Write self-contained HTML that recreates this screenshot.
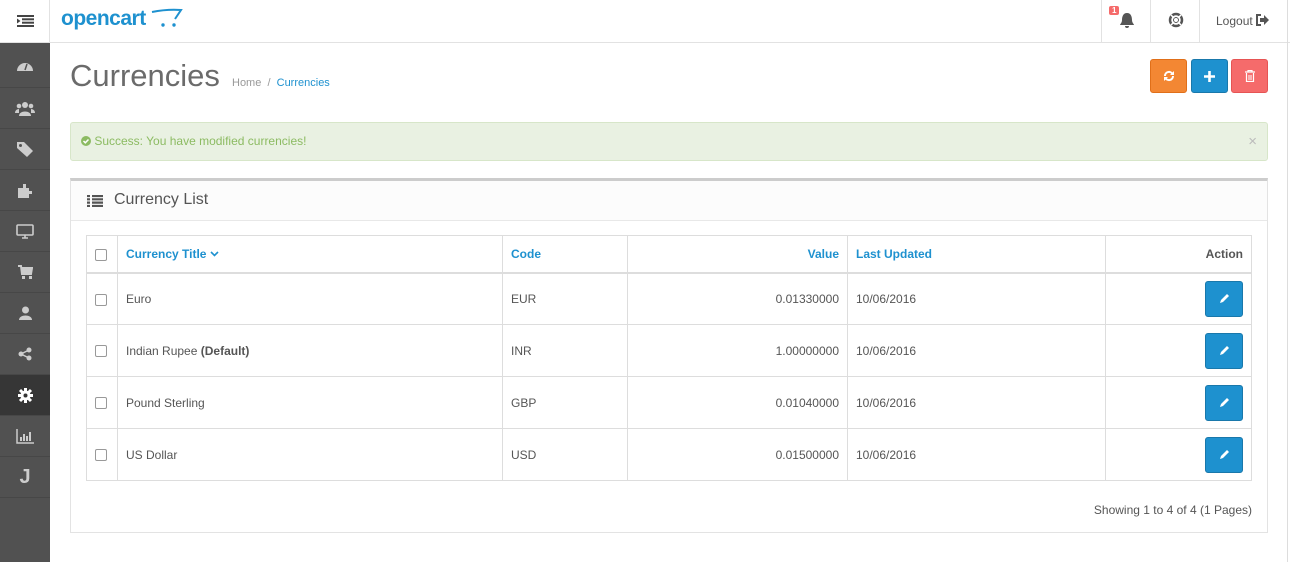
<!DOCTYPE html>
<html><head><meta charset="utf-8"><style>
*{box-sizing:border-box;margin:0;padding:0}
body{width:1290px;height:562px;overflow:hidden;background:#fff;font-family:"Liberation Sans",sans-serif;font-size:12px;color:#555;position:relative}
.hdr{position:absolute;left:0;top:0;width:1290px;height:43px;border-bottom:1px solid #e2e2e2;background:#fff}
.tog{position:absolute;left:0;top:0;width:50px;height:42px;border-right:1px solid #e2e2e2}
.logo{position:absolute;left:61px;top:7px;font-size:21px;font-weight:bold;color:#1e91cf;letter-spacing:-0.5px}
.hnav{position:absolute;top:0;height:42px;border-left:1px solid #e2e2e2}
.side{position:absolute;left:0;top:43px;width:50px;height:519px;background:#515151}
.si{height:41px;border-bottom:1px solid #474747;display:flex;align-items:center;justify-content:center}
.si:first-child{height:45px}
.si.act{background:#363636}
h1{position:absolute;left:70px;top:58px;font-weight:normal;font-size:31px;color:#6b6b6b}
.bc{position:absolute;left:232px;top:77px;font-size:11px;color:#999}
.bc a{color:#1e91cf}
.btn{position:absolute;top:59px;width:37px;height:34px;border-radius:3px;display:flex;align-items:center;justify-content:center;color:#fff;font-weight:bold}
.alert{position:absolute;left:70px;top:122px;width:1198px;height:39px;background:#e9f1e2;border:1px solid #d7e6c9;border-radius:3px;color:#8cbb62;font-size:12px;padding:11px 0 0 10px}
.panel{position:absolute;left:70px;top:178px;width:1198px;height:355px;border:1px solid #e3e3e3;border-top:3px solid #ccc}
.ph{height:40px;background:#fcfcfc;border-bottom:1px solid #e8e8e8;font-size:16px;color:#555;padding:10px 0 0 43px;position:relative}
table{position:absolute;left:15px;top:54px;width:1166px;border-collapse:collapse}
td,th{border:1px solid #ddd;padding:0 8px;font-size:12px;text-align:left;color:#555}
th{height:37px;border-bottom:2px solid #ddd;color:#1e91cf;font-weight:bold}
td{height:52px}
.r{text-align:right}
.cb{display:inline-block;width:12px;height:12px;border:1px solid #999;border-radius:2px;background:#fff;vertical-align:middle}
.ed{display:inline-flex;width:38px;height:36px;background:#1e91cf;border:1px solid #1978ab;border-radius:3px;align-items:center;justify-content:center}
.foot{position:absolute;right:15px;top:322px;font-size:12px;color:#555}
</style></head><body>
<div class="hdr">
 <div class="tog"><svg style="position:absolute;left:17px;top:15px" width="17" height="12"><rect x="0" y="0" width="17" height="2" fill="#444"/><rect x="5" y="3.3" width="12" height="2" fill="#444"/><rect x="5" y="6.7" width="12" height="2" fill="#444"/><rect x="0" y="10" width="17" height="2" fill="#444"/><path d="M0 3.5L3.5 6L0 8.5z" fill="#444"/></svg></div>
 <div class="logo">opencart<svg width="40" height="24" style="position:absolute;left:88px;top:-1px"><path d="M3 6 Q18 3 32 4 L26 13" stroke="#1e91cf" stroke-width="2" fill="none"/><circle cx="14" cy="19" r="1.7" fill="#1e91cf"/><circle cx="25" cy="19" r="1.7" fill="#1e91cf"/></svg></div>
 <div class="hnav" style="left:1101px;width:50px"><span style="position:absolute;left:7px;top:6px;background:#f56b6b;color:#fff;font-size:8px;font-weight:bold;padding:0 3px;border-radius:2px">1</span><svg style="position:absolute;left:17px;top:12px" width="16" height="17"><path d="M8 1C4 1 3 5 3 8C3 11 1 12 1 13H15C15 12 13 11 13 8C13 5 12 1 8 1ZM6 14H10A2 2 0 0 1 6 14Z" fill="#555"/></svg></div>
 <div class="hnav" style="left:1150px;width:50px"><svg style="position:absolute;left:17px;top:12px" width="16" height="16"><circle cx="8" cy="8" r="6" stroke="#555" stroke-width="2.5" fill="none"/><circle cx="8" cy="8" r="2.5" fill="#fff" stroke="#555"/><path d="M3 3L6 6M13 3L10 6M3 13L6 10M13 13L10 10" stroke="#fff" stroke-width="1.5"/></svg></div>
 <div class="hnav" style="left:1199px;width:91px;font-size:12px;color:#555;padding:14px 0 0 16px">Logout <svg width="14" height="12" style="vertical-align:-1px"><path d="M5 1H1V11H5" stroke="#555" stroke-width="2" fill="none"/><path d="M4 4H8V1L13 6L8 11V8H4Z" fill="#555"/></svg></div>
 <div style="position:absolute;left:1287px;top:0;width:1px;height:562px;background:#ddd"></div>
</div>
<div class="side">
 <div class="si"><svg width="18" height="14"><path d="M1 13A8 8 0 1 1 17 13Z" fill="#ccc"/><path d="M9 12L11 6" stroke="#515151" stroke-width="1.5"/></svg></div>
 <div class="si"><svg width="20" height="15"><circle cx="10" cy="4" r="3" fill="#ccc"/><circle cx="4" cy="5" r="2.3" fill="#ccc"/><circle cx="16" cy="5" r="2.3" fill="#ccc"/><path d="M4 15C4 9 16 9 16 15Z" fill="#ccc"/><path d="M0 12C0 8 4 8 4 8V12ZM20 12C20 8 16 8 16 8V12Z" fill="#ccc"/></svg></div>
 <div class="si"><svg width="18" height="16"><path d="M1 1H8L17 10L11 16L1 7Z" fill="#ccc"/><circle cx="4.5" cy="4.5" r="1.5" fill="#515151"/></svg></div>
 <div class="si"><svg width="16" height="15"><path d="M1 5H6V1H9V5H12V8H15V11H12V15H1Z" fill="#ccc"/></svg></div>
 <div class="si"><svg width="18" height="15"><rect x="1" y="1" width="16" height="10" rx="1" stroke="#ccc" stroke-width="1.6" fill="none"/><path d="M6 14H12M9 11V14" stroke="#ccc" stroke-width="1.6"/></svg></div>
 <div class="si"><svg width="15" height="14"><path d="M0 1H3L4 9H13L14 3H4" stroke="#ccc" stroke-width="2" fill="none"/><rect x="4" y="3" width="10" height="6" fill="#ccc"/><rect x="4" y="11" width="3" height="3" fill="#ccc"/><rect x="11" y="11" width="3" height="3" fill="#ccc"/></svg></div>
 <div class="si"><svg width="13" height="14"><circle cx="6.5" cy="4" r="3.5" fill="#ccc"/><path d="M0 14C0 8 13 8 13 14Z" fill="#ccc"/></svg></div>
 <div class="si"><svg width="14" height="14"><circle cx="11" cy="3" r="2.5" fill="#ccc"/><circle cx="3" cy="7" r="2.5" fill="#ccc"/><circle cx="11" cy="11" r="2.5" fill="#ccc"/><path d="M11 3L3 7L11 11" stroke="#ccc" stroke-width="1.5" fill="none"/></svg></div>
 <div class="si act"><svg width="15" height="15"><circle cx="7.5" cy="7.5" r="5" fill="#fff"/><path d="M7.5 0V15M0 7.5H15M2 2L13 13M13 2L2 13" stroke="#fff" stroke-width="3"/><circle cx="7.5" cy="7.5" r="2" fill="#363636"/></svg></div>
 <div class="si"><svg width="18" height="15"><path d="M1 0V14H18" stroke="#ccc" stroke-width="1.5" fill="none"/><path d="M5 12V8M8 12V5M11 12V7M14 12V3" stroke="#ccc" stroke-width="2"/></svg></div>
 <div class="si"><span style="color:#ccc;font-size:20px;font-weight:bold">J</span></div>
</div>
<h1>Currencies</h1>
<div class="bc">Home &nbsp;/ &nbsp;<a>Currencies</a></div>
<div class="btn" style="left:1150px;background:#f38733;border:1px solid #e06f19"><svg width="12" height="12"><path d="M2 6A4 4 0 0 1 9.5 4M10 6A4 4 0 0 1 2.5 8" stroke="#fff" stroke-width="2" fill="none"/><path d="M11 1V5H7ZM1 11V7H5Z" fill="#fff"/></svg></div>
<div class="btn" style="left:1191px;background:#1e91cf;border:1px solid #1978ab"><svg width="11" height="11"><path d="M5.5 0V11M0 5.5H11" stroke="#fff" stroke-width="2.6"/></svg></div>
<div class="btn" style="left:1231px;background:#f56b6b;border:1px solid #e65454"><svg width="10" height="12"><path d="M0 2H10M3 2V0.5H7V2M1.5 3V11.5H8.5V3" stroke="#fff" stroke-width="1.2" fill="none"/><path d="M4 5V10M6 5V10" stroke="#fff"/></svg></div>
<div class="alert"><svg width="10" height="10" style="vertical-align:-1px"><circle cx="5" cy="5" r="5" fill="#8cbb62"/><path d="M2.5 5L4.3 6.8L7.5 3.5" stroke="#fff" stroke-width="1.5" fill="none"/></svg> Success: You have modified currencies!<span style="position:absolute;right:10px;top:10px;color:#bbb;font-size:15px">×</span></div>
<div class="panel">
 <div class="ph"><svg style="position:absolute;left:16px;top:14px" width="16" height="12"><path d="M0 1H3M5 1H16M0 4.3H3M5 4.3H16M0 7.6H3M5 7.6H16M0 11H3M5 11H16" stroke="#555" stroke-width="2.2"/></svg>Currency List</div>
 <table>
  <tr><th style="width:31px"><span class="cb"></span></th><th style="width:385px">Currency Title <svg width="9" height="6" style="vertical-align:1px"><path d="M1 1L4.5 4.5L8 1" stroke="#1e91cf" stroke-width="1.6" fill="none"/></svg></th><th style="width:125px">Code</th><th class="r" style="width:220px">Value</th><th style="width:258px">Last Updated</th><th class="r" style="color:#555">Action</th></tr>
  <tr><td><span class="cb"></span></td><td>Euro</td><td>EUR</td><td class="r">0.01330000</td><td>10/06/2016</td><td class="r"><span class="ed"><svg width="11" height="11"><path d="M1 10L2 7L8 1L10 3L4 9Z" fill="#fff"/></svg></span></td></tr>
  <tr><td><span class="cb"></span></td><td>Indian Rupee <b>(Default)</b></td><td>INR</td><td class="r">1.00000000</td><td>10/06/2016</td><td class="r"><span class="ed"><svg width="11" height="11"><path d="M1 10L2 7L8 1L10 3L4 9Z" fill="#fff"/></svg></span></td></tr>
  <tr><td><span class="cb"></span></td><td>Pound Sterling</td><td>GBP</td><td class="r">0.01040000</td><td>10/06/2016</td><td class="r"><span class="ed"><svg width="11" height="11"><path d="M1 10L2 7L8 1L10 3L4 9Z" fill="#fff"/></svg></span></td></tr>
  <tr><td><span class="cb"></span></td><td>US Dollar</td><td>USD</td><td class="r">0.01500000</td><td>10/06/2016</td><td class="r"><span class="ed"><svg width="11" height="11"><path d="M1 10L2 7L8 1L10 3L4 9Z" fill="#fff"/></svg></span></td></tr>
 </table>
 <div class="foot">Showing 1 to 4 of 4 (1 Pages)</div>
</div>
</body></html>
